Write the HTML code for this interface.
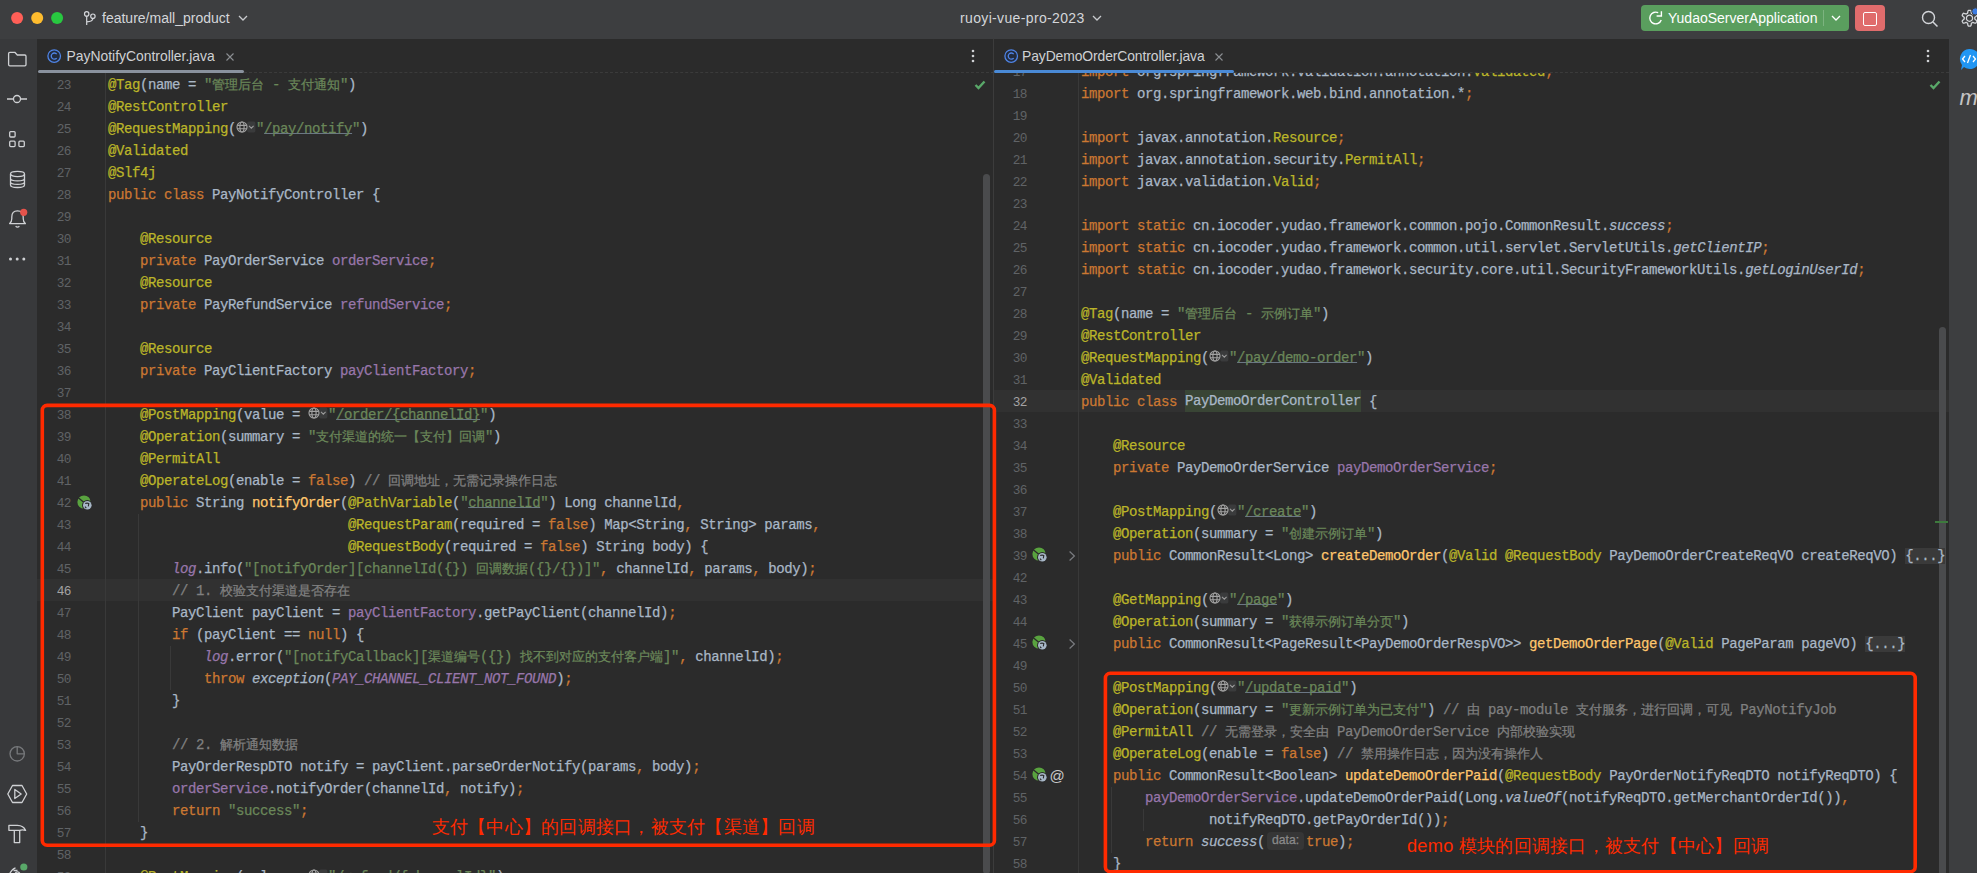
<!DOCTYPE html>
<html><head><meta charset="utf-8"><style>
html,body{margin:0;padding:0}
body{width:1977px;height:873px;overflow:hidden;position:relative;background:#2b2b2b;font-family:"Liberation Sans",sans-serif}
.abs{position:absolute}
.cl,.ln{position:absolute;height:22px;line-height:22px;white-space:pre;font-family:"Liberation Mono",monospace;font-size:14px;letter-spacing:-0.4px;color:#a9b7c6;-webkit-text-stroke:0.25px currentColor}
.ln{margin-top:0.8px;width:40px;text-align:right;color:#606366;font-size:12.8px;letter-spacing:-0.5px;-webkit-text-stroke:0}
.ln.cur{color:#a4a3a3}
.cj{display:inline-block;font-family:"Liberation Sans",sans-serif;font-size:13px;letter-spacing:0;white-space:nowrap;overflow:visible;vertical-align:top}
.k{color:#cc7832}
.a{color:#bbb529}
.s{color:#6a8759}
.u{color:#6a8759;text-decoration:underline;text-decoration-color:#6b7785;text-underline-offset:0px;text-decoration-skip-ink:none}
.c{color:#808080}
.f{color:#9876aa}
.F{color:#9876aa;font-style:italic}
.m{color:#ffc66d}
.i{font-style:italic}
.X{background:#394535;display:inline-block;height:22px;vertical-align:top;margin-top:-1px}
.D{background:#3a3a3a;color:#a9b7c6}
.gl{display:inline-block;width:20px;height:22px;vertical-align:top}
.gl svg{margin-top:2px}
.hint{display:inline-block;width:37px;margin:0 2px;height:17.5px;line-height:17px;margin-top:1px;vertical-align:top;background:#363636;border-radius:4px;color:#8a8a8a;font-family:"Liberation Sans",sans-serif;font-size:12.2px;letter-spacing:0;text-align:center}
.tb{font-size:14px;color:#d4d6da;white-space:pre;line-height:17px}
.tab{font-size:13.9px;color:#cfd1d4;white-space:pre;line-height:17px}
.red{font-size:18.2px;letter-spacing:0.25px;color:#ff2a00;white-space:pre;line-height:24px}

</style></head><body>
<!-- title bar -->
<div class="abs" style="left:0;top:0;width:1977px;height:39px;background:#3d3e40"></div>
<svg class="abs" style="left:0;top:0" width="120" height="37">
  <circle cx="17.1" cy="18.1" r="6" fill="#ff5f57"/>
  <circle cx="37.2" cy="18.1" r="6" fill="#febc2e"/>
  <circle cx="57.1" cy="18.1" r="6" fill="#28c840"/>
  <g fill="none" stroke="#d4d6da" stroke-width="1.2">
    <circle cx="86.7" cy="13.9" r="2.2"/>
    <circle cx="92.9" cy="16.2" r="2.2"/>
    <path d="M86.7 16.1V25M92.9 18.4C92.9 21 90 21.6 86.7 21.8"/>
  </g>
</svg>
<div class="abs tb" style="left:102px;top:10px">feature/mall_product</div>
<svg class="abs" style="left:236px;top:13px" width="14" height="10"><path d="M3 3L7 7L11 3" fill="none" stroke="#c8cacd" stroke-width="1.3"/></svg>
<div class="abs tb" style="left:960px;top:10px;letter-spacing:0.35px">ruoyi-vue-pro-2023</div>
<svg class="abs" style="left:1090px;top:13px" width="14" height="10"><path d="M3 3L7 7L11 3" fill="none" stroke="#c8cacd" stroke-width="1.3"/></svg>
<!-- run config -->
<div class="abs" style="left:1641px;top:5px;width:208px;height:26px;background:#5a9e5e;border-radius:4px"></div>
<svg class="abs" style="left:1645px;top:7px" width="22" height="22"><path d="M16.24 13.02A5.9 5.9 0 1 1 13.19 5.65" fill="none" stroke="#fff" stroke-width="1.4"/><path d="M11.6 9H16.4V4.2" fill="none" stroke="#fff" stroke-width="1.4"/></svg>
<div class="abs" style="left:1668px;top:9.5px;font-size:14px;letter-spacing:0;color:#fff;white-space:pre;line-height:17px">YudaoServerApplication</div>
<div class="abs" style="left:1823px;top:10px;width:1px;height:16px;background:#7cb37f"></div>
<svg class="abs" style="left:1829px;top:13px" width="14" height="10"><path d="M3 3L7 7L11 3" fill="none" stroke="#fff" stroke-width="1.3"/></svg>
<div class="abs" style="left:1855px;top:5px;width:30px;height:26px;background:#e06c6c;border-radius:4px"></div>
<div class="abs" style="left:1863px;top:12px;width:12px;height:12px;border:1.4px solid #fff;border-radius:2px"></div>
<svg class="abs" style="left:1918px;top:7px" width="24" height="24"><circle cx="10.5" cy="10.5" r="6" fill="none" stroke="#d4d6da" stroke-width="1.4"/><path d="M15 15L19.5 19.5" stroke="#d4d6da" stroke-width="1.5"/></svg>
<svg class="abs" style="left:1957px;top:6px" width="20" height="26"><g transform="translate(12.5 12.2)" fill="none" stroke="#d4d6da" stroke-width="1.3" stroke-linejoin="round"><path d="M5.30 0.00L5.29 0.35L5.25 0.69L5.59 1.11L6.38 1.71L7.10 2.41L7.30 3.02L7.09 3.49L6.84 3.95L6.57 4.39L6.27 4.81L5.64 4.94L4.67 4.67L3.76 4.29L3.23 4.20L2.94 4.41L2.65 4.59L2.34 4.75L2.03 4.90L1.83 5.40L1.71 6.38L1.46 7.35L1.03 7.83L0.52 7.88L0.00 7.90L-0.52 7.88L-1.03 7.83L-1.46 7.35L-1.71 6.38L-1.83 5.40L-2.03 4.90L-2.34 4.75L-2.65 4.59L-2.94 4.41L-3.23 4.20L-3.76 4.29L-4.67 4.67L-5.64 4.94L-6.27 4.81L-6.57 4.39L-6.84 3.95L-7.09 3.49L-7.30 3.02L-7.10 2.41L-6.38 1.71L-5.59 1.11L-5.25 0.69L-5.29 0.35L-5.30 0.00L-5.29 -0.35L-5.25 -0.69L-5.59 -1.11L-6.38 -1.71L-7.10 -2.41L-7.30 -3.02L-7.09 -3.49L-6.84 -3.95L-6.57 -4.39L-6.27 -4.81L-5.64 -4.94L-4.67 -4.67L-3.76 -4.29L-3.23 -4.20L-2.94 -4.41L-2.65 -4.59L-2.34 -4.75L-2.03 -4.90L-1.83 -5.40L-1.71 -6.38L-1.46 -7.35L-1.03 -7.83L-0.52 -7.88L-0.00 -7.90L0.52 -7.88L1.03 -7.83L1.46 -7.35L1.71 -6.38L1.83 -5.40L2.03 -4.90L2.34 -4.75L2.65 -4.59L2.94 -4.41L3.23 -4.20L3.76 -4.29L4.67 -4.67L5.64 -4.94L6.27 -4.81L6.57 -4.39L6.84 -3.95L7.09 -3.49L7.30 -3.02L7.10 -2.41L6.38 -1.71L5.59 -1.11L5.25 -0.69L5.29 -0.35Z"/><circle r="3.1"/></g><circle cx="18.4" cy="5.4" r="3.6" fill="#3d7ce0" stroke="#3d3e40" stroke-width="1"/></svg>

<!-- left tool strip -->
<div class="abs" style="left:0;top:39px;width:37px;height:834px;background:#38393b"></div>
<svg class="abs" style="left:0;top:38px" width="37" height="835">
  <g fill="none" stroke="#cfd1d4" stroke-width="1.3" stroke-linejoin="round">
    <path d="M8.6 15.5V26.5Q8.6 27.8 9.9 27.8H24.8Q26 27.8 26 26.5V18.2Q26 17 24.8 17H17.3L14.8 14.3H9.9Q8.6 14.3 8.6 15.5Z"/>
    <path d="M7 61H13.5M20.5 61H27"/><circle cx="17" cy="61" r="3.5"/>
    <rect x="9.7" y="93.6" width="5.4" height="5.4" rx="1"/><rect x="9.7" y="103.2" width="5.4" height="5.4" rx="1"/><rect x="18.9" y="103.2" width="5.4" height="5.4" rx="1"/>
    <ellipse cx="17.5" cy="136" rx="7" ry="2.6"/><path d="M10.5 136V147Q10.5 149.5 17.5 149.5Q24.5 149.5 24.5 147V136M10.5 140.4Q10.5 142.8 17.5 142.8Q24.5 142.8 24.5 140.4M10.5 144Q10.5 146.4 17.5 146.4Q24.5 146.4 24.5 144"/>
    <path d="M9.6 185.6Q11.8 184.2 11.8 180.5V179Q11.8 172.9 17.5 172.9Q23.2 172.9 23.2 179V180.5Q23.2 184.2 25.4 185.6Z"/><path d="M15.6 188.2Q17.5 190 19.4 188.2"/>
  </g>
  <circle cx="23.7" cy="174.3" r="3.6" fill="#e5534b"/>
  <g fill="#cfd1d4"><circle cx="10.5" cy="221" r="1.5"/><circle cx="17.2" cy="221" r="1.5"/><circle cx="23.8" cy="221" r="1.5"/></g>
  <g fill="none" stroke="#cfd1d4" stroke-width="1.3" stroke-linejoin="round">
    <circle cx="17.2" cy="715.8" r="7.2" stroke="#77797c"/><path d="M17.2 708.6V715.8H24.4" stroke="#77797c"/>
    <path d="M12.5 747.5H22L26.7 756L22 764.5H12.5L7.8 756Z"/><path d="M14.8 751.5V760.5L21.2 756Z"/>
    <path d="M8.9 787.4H17.5Q23.5 787.6 25.6 792.4Q22.5 791.3 19.7 792.3H8.9Z"/><path d="M14.3 792.3V804.6H19.7V792.3"/>
    <path d="M9.5 836Q12 831 15.5 829.8M13.5 832.5H17.5" /><circle cx="17.5" cy="836" r="2.2"/>
  </g>
  <circle cx="23.8" cy="829" r="3.6" fill="#59a869"/>
</svg>

<!-- left editor -->
<div class="abs" style="left:37px;top:39px;width:957px;height:834px;background:#2b2b2b;overflow:hidden">
  <svg class="abs" style="left:9px;top:10px" width="16" height="16"><circle cx="8.2" cy="7.1" r="6.3" fill="#222b3d" stroke="#4f84e6" stroke-width="1.3"/><path d="M10.7 5.1A3.1 3.1 0 1 0 10.7 9.1" fill="none" stroke="#4f84e6" stroke-width="1.3"/></svg>
  <div class="abs tab" style="left:29.5px;top:9px">PayNotifyController.java</div>
  <svg class="abs" style="left:187px;top:12px" width="12" height="12"><path d="M2.5 2.5L9.5 9.5M9.5 2.5L2.5 9.5" stroke="#8c8f93" stroke-width="1.1"/></svg>
  <div class="abs" style="left:1.3px;top:31.4px;width:205.3px;height:2.5px;border-radius:2px;background:#8a929e"></div>
  <div class="abs" style="left:207px;top:33px;width:750px;height:0;border-top:1px dashed #3b3b3b"></div>
  <svg class="abs" style="left:930px;top:9px" width="12" height="16"><g fill="#cfd1d4"><circle cx="6" cy="3" r="1.3"/><circle cx="6" cy="8" r="1.3"/><circle cx="6" cy="13" r="1.3"/></g></svg>
  <div class="abs" style="left:0;top:34px;width:957px;height:800px;overflow:hidden">
    <div class="abs" style="left:-37px;top:-73px;width:1977px;height:873px">
      <div class="abs" style="left:37px;top:579px;width:957px;height:22px;background:#313131"></div>
      <div class="abs" style="left:105px;top:73px;width:1px;height:800px;background:#393939"></div>
      <div class="abs" style="left:983px;top:174px;width:7px;height:700px;border-radius:4px;background:#4a4b4d"></div>
<div class="ln" style="top:74.3px;left:31px">23</div>
<div class="cl" style="top:74.3px;left:108px"><span class="a">@Tag</span>(name = <span class="s">"<span class="cj" style="width:52px">管理后台</span> - <span class="cj" style="width:52px">支付通知</span>"</span>)</div>
<div class="ln" style="top:96.3px;left:31px">24</div>
<div class="cl" style="top:96.3px;left:108px"><span class="a">@RestController</span></div>
<div class="ln" style="top:118.3px;left:31px">25</div>
<div class="cl" style="top:118.3px;left:108px"><span class="a">@RequestMapping</span>(<span class="gl"><svg width="20" height="14" viewBox="0 0 20 14"><rect x="11.2" y="1.6" width="8.2" height="10.8" rx="1.6" fill="#3a3b3c"/><g fill="none" stroke="#a2a2a2" stroke-width="1.15"><circle cx="6" cy="7" r="5"/><ellipse cx="6" cy="7" rx="2.1" ry="5"/><path d="M1.2 5.3H10.8M1.2 8.7H10.8"/></g><path d="M13 5.8L15.3 8.1L17.6 5.8" fill="none" stroke="#9a9a9a" stroke-width="1.1"/></svg></span><span class="s">"</span><span class="u">/pay/notify</span><span class="s">"</span>)</div>
<div class="ln" style="top:140.3px;left:31px">26</div>
<div class="cl" style="top:140.3px;left:108px"><span class="a">@Validated</span></div>
<div class="ln" style="top:162.3px;left:31px">27</div>
<div class="cl" style="top:162.3px;left:108px"><span class="a">@Slf4j</span></div>
<div class="ln" style="top:184.3px;left:31px">28</div>
<div class="cl" style="top:184.3px;left:108px"><span class="k">public class </span>PayNotifyController {</div>
<div class="ln" style="top:206.3px;left:31px">29</div>
<div class="ln" style="top:228.3px;left:31px">30</div>
<div class="cl" style="top:228.3px;left:108px">    <span class="a">@Resource</span></div>
<div class="ln" style="top:250.3px;left:31px">31</div>
<div class="cl" style="top:250.3px;left:108px">    <span class="k">private </span>PayOrderService <span class="f">orderService</span><span class="k">;</span></div>
<div class="ln" style="top:272.3px;left:31px">32</div>
<div class="cl" style="top:272.3px;left:108px">    <span class="a">@Resource</span></div>
<div class="ln" style="top:294.3px;left:31px">33</div>
<div class="cl" style="top:294.3px;left:108px">    <span class="k">private </span>PayRefundService <span class="f">refundService</span><span class="k">;</span></div>
<div class="ln" style="top:316.3px;left:31px">34</div>
<div class="ln" style="top:338.3px;left:31px">35</div>
<div class="cl" style="top:338.3px;left:108px">    <span class="a">@Resource</span></div>
<div class="ln" style="top:360.3px;left:31px">36</div>
<div class="cl" style="top:360.3px;left:108px">    <span class="k">private </span>PayClientFactory <span class="f">payClientFactory</span><span class="k">;</span></div>
<div class="ln" style="top:382.3px;left:31px">37</div>
<div class="ln" style="top:404.3px;left:31px">38</div>
<div class="cl" style="top:404.3px;left:108px">    <span class="a">@PostMapping</span>(value = <span class="gl"><svg width="20" height="14" viewBox="0 0 20 14"><rect x="11.2" y="1.6" width="8.2" height="10.8" rx="1.6" fill="#3a3b3c"/><g fill="none" stroke="#a2a2a2" stroke-width="1.15"><circle cx="6" cy="7" r="5"/><ellipse cx="6" cy="7" rx="2.1" ry="5"/><path d="M1.2 5.3H10.8M1.2 8.7H10.8"/></g><path d="M13 5.8L15.3 8.1L17.6 5.8" fill="none" stroke="#9a9a9a" stroke-width="1.1"/></svg></span><span class="s">"</span><span class="u">/order/{channelId}</span><span class="s">"</span>)</div>
<div class="ln" style="top:426.3px;left:31px">39</div>
<div class="cl" style="top:426.3px;left:108px">    <span class="a">@Operation</span>(summary = <span class="s">"<span class="cj" style="width:169px">支付渠道的统一【支付】回调</span>"</span>)</div>
<div class="ln" style="top:448.3px;left:31px">40</div>
<div class="cl" style="top:448.3px;left:108px">    <span class="a">@PermitAll</span></div>
<div class="ln" style="top:470.3px;left:31px">41</div>
<div class="cl" style="top:470.3px;left:108px">    <span class="a">@OperateLog</span>(enable = <span class="k">false</span>) <span class="c">// <span class="cj" style="width:169px">回调地址，无需记录操作日志</span></span></div>
<div class="ln" style="top:492.3px;left:31px">42</div>
<div class="cl" style="top:492.3px;left:108px">    <span class="k">public </span>String <span class="m">notifyOrder</span>(<span class="a">@PathVariable</span>(<span class="s">"</span><span class="u">channelId</span><span class="s">"</span>) Long channelId<span class="k">,</span></div>
<div class="ln" style="top:514.3px;left:31px">43</div>
<div class="cl" style="top:514.3px;left:108px">                              <span class="a">@RequestParam</span>(required = <span class="k">false</span>) Map&lt;String<span class="k">,</span> String&gt; params<span class="k">,</span></div>
<div class="ln" style="top:536.3px;left:31px">44</div>
<div class="cl" style="top:536.3px;left:108px">                              <span class="a">@RequestBody</span>(required = <span class="k">false</span>) String body) {</div>
<div class="ln" style="top:558.3px;left:31px">45</div>
<div class="cl" style="top:558.3px;left:108px">        <span class="F">log</span>.info(<span class="s">"[notifyOrder][channelId({}) <span class="cj" style="width:52px">回调数据</span>({}/{})]"</span><span class="k">,</span> channelId<span class="k">,</span> params<span class="k">,</span> body)<span class="k">;</span></div>
<div class="ln cur" style="top:580.3px;left:31px">46</div>
<div class="cl" style="top:580.3px;left:108px">        <span class="c">// 1. <span class="cj" style="width:130px">校验支付渠道是否存在</span></span></div>
<div class="ln" style="top:602.3px;left:31px">47</div>
<div class="cl" style="top:602.3px;left:108px">        PayClient payClient = <span class="f">payClientFactory</span>.getPayClient(channelId)<span class="k">;</span></div>
<div class="ln" style="top:624.3px;left:31px">48</div>
<div class="cl" style="top:624.3px;left:108px">        <span class="k">if </span>(payClient == <span class="k">null</span>) {</div>
<div class="ln" style="top:646.3px;left:31px">49</div>
<div class="cl" style="top:646.3px;left:108px">            <span class="F">log</span>.error(<span class="s">"[notifyCallback][<span class="cj" style="width:52px">渠道编号</span>({}) <span class="cj" style="width:143px">找不到对应的支付客户端</span>]"</span><span class="k">,</span> channelId)<span class="k">;</span></div>
<div class="ln" style="top:668.3px;left:31px">50</div>
<div class="cl" style="top:668.3px;left:108px">            <span class="k">throw </span><span class="i">exception</span>(<span class="F">PAY_CHANNEL_CLIENT_NOT_FOUND</span>)<span class="k">;</span></div>
<div class="ln" style="top:690.3px;left:31px">51</div>
<div class="cl" style="top:690.3px;left:108px">        }</div>
<div class="ln" style="top:712.3px;left:31px">52</div>
<div class="ln" style="top:734.3px;left:31px">53</div>
<div class="cl" style="top:734.3px;left:108px">        <span class="c">// 2. <span class="cj" style="width:78px">解析通知数据</span></span></div>
<div class="ln" style="top:756.3px;left:31px">54</div>
<div class="cl" style="top:756.3px;left:108px">        PayOrderRespDTO notify = payClient.parseOrderNotify(params<span class="k">,</span> body)<span class="k">;</span></div>
<div class="ln" style="top:778.3px;left:31px">55</div>
<div class="cl" style="top:778.3px;left:108px">        <span class="f">orderService</span>.notifyOrder(channelId<span class="k">,</span> notify)<span class="k">;</span></div>
<div class="ln" style="top:800.3px;left:31px">56</div>
<div class="cl" style="top:800.3px;left:108px">        <span class="k">return </span><span class="s">"success"</span><span class="k">;</span></div>
<div class="ln" style="top:822.3px;left:31px">57</div>
<div class="cl" style="top:822.3px;left:108px">    }</div>
<div class="ln" style="top:844.3px;left:31px">58</div>
<div class="ln" style="top:866.3px;left:31px">59</div>
<div class="cl" style="top:866.3px;left:108px">    <span class="a">@PostMapping</span>(value = <span class="gl"><svg width="20" height="14" viewBox="0 0 20 14"><rect x="11.2" y="1.6" width="8.2" height="10.8" rx="1.6" fill="#3a3b3c"/><g fill="none" stroke="#a2a2a2" stroke-width="1.15"><circle cx="6" cy="7" r="5"/><ellipse cx="6" cy="7" rx="2.1" ry="5"/><path d="M1.2 5.3H10.8M1.2 8.7H10.8"/></g><path d="M13 5.8L15.3 8.1L17.6 5.8" fill="none" stroke="#9a9a9a" stroke-width="1.1"/></svg></span><span class="s">"</span><span class="u">/refund/{channelId}</span><span class="s">"</span>)</div><svg class="abs" style="left:76px;top:493.6px" width="18" height="18" viewBox="-8 -8 18 18"><circle r="6.6" fill="#59a33f"/><path d="M-6 -4.6L1.5 1.8" stroke="#2b2b2b" stroke-width="1.3"/><circle cx="3.3" cy="3.2" r="5.3" fill="#2b2b2b"/><circle cx="3.3" cy="3.2" r="4.3" fill="#a7b7c7"/><path d="M1.2 1.6Q3 0.6 4.8 1.5L4.3 4.4M1 4.6L2.3 6.2" fill="none" stroke="#2b2b2b" stroke-width="1.1"/></svg><div class="abs" style="left:138px;top:514.3px;width:1px;height:308px;background:#393939"></div><div class="abs" style="left:170px;top:646.3px;width:1px;height:44px;background:#393939"></div>
      <svg class="abs" style="left:973px;top:79px" width="14" height="12"><path d="M2.5 6L5.5 9L11.5 2.5" fill="none" stroke="#59a869" stroke-width="2.4"/></svg>
    </div>
  </div>
</div>
<div class="abs" style="left:993px;top:38px;width:1px;height:835px;background:#3c3c3c"></div>
<!-- right editor -->
<div class="abs" style="left:994px;top:39px;width:955px;height:834px;background:#2b2b2b;overflow:hidden">
  <svg class="abs" style="left:9px;top:10px" width="16" height="16"><circle cx="8.2" cy="7.1" r="6.3" fill="#222b3d" stroke="#4f84e6" stroke-width="1.3"/><path d="M10.7 5.1A3.1 3.1 0 1 0 10.7 9.1" fill="none" stroke="#4f84e6" stroke-width="1.3"/></svg>
  <div class="abs tab" style="left:28px;top:9px;letter-spacing:-0.1px">PayDemoOrderController.java</div>
  <svg class="abs" style="left:219px;top:12px" width="12" height="12"><path d="M2.5 2.5L9.5 9.5M9.5 2.5L2.5 9.5" stroke="#8c8f93" stroke-width="1.1"/></svg>
  <div class="abs" style="left:0;top:31.4px;width:240px;height:2.8px;border-radius:2px;background:#4a8ad6"></div>
  <div class="abs" style="left:240px;top:33px;width:715px;height:0;border-top:1px dashed #3b3b3b"></div>
  <svg class="abs" style="left:928px;top:9px" width="12" height="16"><g fill="#cfd1d4"><circle cx="6" cy="3" r="1.3"/><circle cx="6" cy="8" r="1.3"/><circle cx="6" cy="13" r="1.3"/></g></svg>
  <div class="abs" style="left:0;top:34px;width:955px;height:800px;overflow:hidden">
    <div class="abs" style="left:-994px;top:-73px;width:1977px;height:873px">
      <div class="abs" style="left:994px;top:390px;width:955px;height:22px;background:#313131"></div>
      <div class="abs" style="left:1078px;top:73px;width:1px;height:800px;background:#393939"></div>
      <div class="abs" style="left:1939px;top:327px;width:7px;height:560px;border-radius:4px;background:#4a4b4d"></div>
<div class="ln" style="top:61px;left:987px">17</div>
<div class="cl" style="top:61px;left:1081px"><span class="k">import </span>org.springframework.validation.annotation.<span class="a">Validated</span><span class="k">;</span></div>
<div class="ln" style="top:83px;left:987px">18</div>
<div class="cl" style="top:83px;left:1081px"><span class="k">import </span>org.springframework.web.bind.annotation.*<span class="k">;</span></div>
<div class="ln" style="top:105px;left:987px">19</div>
<div class="ln" style="top:127px;left:987px">20</div>
<div class="cl" style="top:127px;left:1081px"><span class="k">import </span>javax.annotation.<span class="a">Resource</span><span class="k">;</span></div>
<div class="ln" style="top:149px;left:987px">21</div>
<div class="cl" style="top:149px;left:1081px"><span class="k">import </span>javax.annotation.security.<span class="a">PermitAll</span><span class="k">;</span></div>
<div class="ln" style="top:171px;left:987px">22</div>
<div class="cl" style="top:171px;left:1081px"><span class="k">import </span>javax.validation.<span class="a">Valid</span><span class="k">;</span></div>
<div class="ln" style="top:193px;left:987px">23</div>
<div class="ln" style="top:215px;left:987px">24</div>
<div class="cl" style="top:215px;left:1081px"><span class="k">import static </span>cn.iocoder.yudao.framework.common.pojo.CommonResult.<span class="i">success</span><span class="k">;</span></div>
<div class="ln" style="top:237px;left:987px">25</div>
<div class="cl" style="top:237px;left:1081px"><span class="k">import static </span>cn.iocoder.yudao.framework.common.util.servlet.ServletUtils.<span class="i">getClientIP</span><span class="k">;</span></div>
<div class="ln" style="top:259px;left:987px">26</div>
<div class="cl" style="top:259px;left:1081px"><span class="k">import static </span>cn.iocoder.yudao.framework.security.core.util.SecurityFrameworkUtils.<span class="i">getLoginUserId</span><span class="k">;</span></div>
<div class="ln" style="top:281px;left:987px">27</div>
<div class="ln" style="top:303px;left:987px">28</div>
<div class="cl" style="top:303px;left:1081px"><span class="a">@Tag</span>(name = <span class="s">"<span class="cj" style="width:52px">管理后台</span> - <span class="cj" style="width:52px">示例订单</span>"</span>)</div>
<div class="ln" style="top:325px;left:987px">29</div>
<div class="cl" style="top:325px;left:1081px"><span class="a">@RestController</span></div>
<div class="ln" style="top:347px;left:987px">30</div>
<div class="cl" style="top:347px;left:1081px"><span class="a">@RequestMapping</span>(<span class="gl"><svg width="20" height="14" viewBox="0 0 20 14"><rect x="11.2" y="1.6" width="8.2" height="10.8" rx="1.6" fill="#3a3b3c"/><g fill="none" stroke="#a2a2a2" stroke-width="1.15"><circle cx="6" cy="7" r="5"/><ellipse cx="6" cy="7" rx="2.1" ry="5"/><path d="M1.2 5.3H10.8M1.2 8.7H10.8"/></g><path d="M13 5.8L15.3 8.1L17.6 5.8" fill="none" stroke="#9a9a9a" stroke-width="1.1"/></svg></span><span class="s">"</span><span class="u">/pay/demo-order</span><span class="s">"</span>)</div>
<div class="ln" style="top:369px;left:987px">31</div>
<div class="cl" style="top:369px;left:1081px"><span class="a">@Validated</span></div>
<div class="ln cur" style="top:391px;left:987px">32</div>
<div class="cl" style="top:391px;left:1081px"><span class="k">public class </span><span class="X">PayDemoOrderController</span> {</div>
<div class="ln" style="top:413px;left:987px">33</div>
<div class="ln" style="top:435px;left:987px">34</div>
<div class="cl" style="top:435px;left:1081px">    <span class="a">@Resource</span></div>
<div class="ln" style="top:457px;left:987px">35</div>
<div class="cl" style="top:457px;left:1081px">    <span class="k">private </span>PayDemoOrderService <span class="f">payDemoOrderService</span><span class="k">;</span></div>
<div class="ln" style="top:479px;left:987px">36</div>
<div class="ln" style="top:501px;left:987px">37</div>
<div class="cl" style="top:501px;left:1081px">    <span class="a">@PostMapping</span>(<span class="gl"><svg width="20" height="14" viewBox="0 0 20 14"><rect x="11.2" y="1.6" width="8.2" height="10.8" rx="1.6" fill="#3a3b3c"/><g fill="none" stroke="#a2a2a2" stroke-width="1.15"><circle cx="6" cy="7" r="5"/><ellipse cx="6" cy="7" rx="2.1" ry="5"/><path d="M1.2 5.3H10.8M1.2 8.7H10.8"/></g><path d="M13 5.8L15.3 8.1L17.6 5.8" fill="none" stroke="#9a9a9a" stroke-width="1.1"/></svg></span><span class="s">"</span><span class="u">/create</span><span class="s">"</span>)</div>
<div class="ln" style="top:523px;left:987px">38</div>
<div class="cl" style="top:523px;left:1081px">    <span class="a">@Operation</span>(summary = <span class="s">"<span class="cj" style="width:78px">创建示例订单</span>"</span>)</div>
<div class="ln" style="top:545px;left:987px">39</div>
<div class="cl" style="top:545px;left:1081px">    <span class="k">public </span>CommonResult&lt;Long&gt; <span class="m">createDemoOrder</span>(<span class="a">@Valid @RequestBody</span> PayDemoOrderCreateReqVO createReqVO) <span class="D">{...}</span></div>
<div class="ln" style="top:567px;left:987px">42</div>
<div class="ln" style="top:589px;left:987px">43</div>
<div class="cl" style="top:589px;left:1081px">    <span class="a">@GetMapping</span>(<span class="gl"><svg width="20" height="14" viewBox="0 0 20 14"><rect x="11.2" y="1.6" width="8.2" height="10.8" rx="1.6" fill="#3a3b3c"/><g fill="none" stroke="#a2a2a2" stroke-width="1.15"><circle cx="6" cy="7" r="5"/><ellipse cx="6" cy="7" rx="2.1" ry="5"/><path d="M1.2 5.3H10.8M1.2 8.7H10.8"/></g><path d="M13 5.8L15.3 8.1L17.6 5.8" fill="none" stroke="#9a9a9a" stroke-width="1.1"/></svg></span><span class="s">"</span><span class="u">/page</span><span class="s">"</span>)</div>
<div class="ln" style="top:611px;left:987px">44</div>
<div class="cl" style="top:611px;left:1081px">    <span class="a">@Operation</span>(summary = <span class="s">"<span class="cj" style="width:104px">获得示例订单分页</span>"</span>)</div>
<div class="ln" style="top:633px;left:987px">45</div>
<div class="cl" style="top:633px;left:1081px">    <span class="k">public </span>CommonResult&lt;PageResult&lt;PayDemoOrderRespVO&gt;&gt; <span class="m">getDemoOrderPage</span>(<span class="a">@Valid</span> PageParam pageVO) <span class="D">{...}</span></div>
<div class="ln" style="top:655px;left:987px">49</div>
<div class="ln" style="top:677px;left:987px">50</div>
<div class="cl" style="top:677px;left:1081px">    <span class="a">@PostMapping</span>(<span class="gl"><svg width="20" height="14" viewBox="0 0 20 14"><rect x="11.2" y="1.6" width="8.2" height="10.8" rx="1.6" fill="#3a3b3c"/><g fill="none" stroke="#a2a2a2" stroke-width="1.15"><circle cx="6" cy="7" r="5"/><ellipse cx="6" cy="7" rx="2.1" ry="5"/><path d="M1.2 5.3H10.8M1.2 8.7H10.8"/></g><path d="M13 5.8L15.3 8.1L17.6 5.8" fill="none" stroke="#9a9a9a" stroke-width="1.1"/></svg></span><span class="s">"</span><span class="u">/update-paid</span><span class="s">"</span>)</div>
<div class="ln" style="top:699px;left:987px">51</div>
<div class="cl" style="top:699px;left:1081px">    <span class="a">@Operation</span>(summary = <span class="s">"<span class="cj" style="width:130px">更新示例订单为已支付</span>"</span>) <span class="c">// <span class="cj" style="width:13px">由</span> pay-module <span class="cj" style="width:156px">支付服务，进行回调，可见</span> PayNotifyJob</span></div>
<div class="ln" style="top:721px;left:987px">52</div>
<div class="cl" style="top:721px;left:1081px">    <span class="a">@PermitAll</span> <span class="c">// <span class="cj" style="width:104px">无需登录，安全由</span> PayDemoOrderService <span class="cj" style="width:78px">内部校验实现</span></span></div>
<div class="ln" style="top:743px;left:987px">53</div>
<div class="cl" style="top:743px;left:1081px">    <span class="a">@OperateLog</span>(enable = <span class="k">false</span>) <span class="c">// <span class="cj" style="width:182px">禁用操作日志，因为没有操作人</span></span></div>
<div class="ln" style="top:765px;left:987px">54</div>
<div class="cl" style="top:765px;left:1081px">    <span class="k">public </span>CommonResult&lt;Boolean&gt; <span class="m">updateDemoOrderPaid</span>(<span class="a">@RequestBody</span> PayOrderNotifyReqDTO notifyReqDTO) {</div>
<div class="ln" style="top:787px;left:987px">55</div>
<div class="cl" style="top:787px;left:1081px">        <span class="f">payDemoOrderService</span>.updateDemoOrderPaid(Long.<span class="i">valueOf</span>(notifyReqDTO.getMerchantOrderId())<span class="k">,</span></div>
<div class="ln" style="top:809px;left:987px">56</div>
<div class="cl" style="top:809px;left:1081px">                notifyReqDTO.getPayOrderId())<span class="k">;</span></div>
<div class="ln" style="top:831px;left:987px">57</div>
<div class="cl" style="top:831px;left:1081px">        <span class="k">return </span><span class="i">success</span>(<span class="hint">data:</span><span class="k">true</span>)<span class="k">;</span></div>
<div class="ln" style="top:853px;left:987px">58</div>
<div class="cl" style="top:853px;left:1081px">    }</div><svg class="abs" style="left:1031.3px;top:546.3px" width="18" height="18" viewBox="-8 -8 18 18"><circle r="6.6" fill="#59a33f"/><path d="M-6 -4.6L1.5 1.8" stroke="#2b2b2b" stroke-width="1.3"/><circle cx="3.3" cy="3.2" r="5.3" fill="#2b2b2b"/><circle cx="3.3" cy="3.2" r="4.3" fill="#a7b7c7"/><path d="M1.2 1.6Q3 0.6 4.8 1.5L4.3 4.4M1 4.6L2.3 6.2" fill="none" stroke="#2b2b2b" stroke-width="1.1"/></svg><svg class="abs" style="left:1031.3px;top:634.3px" width="18" height="18" viewBox="-8 -8 18 18"><circle r="6.6" fill="#59a33f"/><path d="M-6 -4.6L1.5 1.8" stroke="#2b2b2b" stroke-width="1.3"/><circle cx="3.3" cy="3.2" r="5.3" fill="#2b2b2b"/><circle cx="3.3" cy="3.2" r="4.3" fill="#a7b7c7"/><path d="M1.2 1.6Q3 0.6 4.8 1.5L4.3 4.4M1 4.6L2.3 6.2" fill="none" stroke="#2b2b2b" stroke-width="1.1"/></svg><svg class="abs" style="left:1031.3px;top:766.3px" width="18" height="18" viewBox="-8 -8 18 18"><circle r="6.6" fill="#59a33f"/><path d="M-6 -4.6L1.5 1.8" stroke="#2b2b2b" stroke-width="1.3"/><circle cx="3.3" cy="3.2" r="5.3" fill="#2b2b2b"/><circle cx="3.3" cy="3.2" r="4.3" fill="#a7b7c7"/><path d="M1.2 1.6Q3 0.6 4.8 1.5L4.3 4.4M1 4.6L2.3 6.2" fill="none" stroke="#2b2b2b" stroke-width="1.1"/></svg><svg class="abs" style="left:1067px;top:545px" width="10" height="22"><path d="M2.6 6.5L7.4 11L2.6 15.5" fill="none" stroke="#7a7c80" stroke-width="1.2"/></svg><svg class="abs" style="left:1067px;top:633px" width="10" height="22"><path d="M2.6 6.5L7.4 11L2.6 15.5" fill="none" stroke="#7a7c80" stroke-width="1.2"/></svg><div class="abs" style="left:1049px;top:765px;width:16px;height:22px;line-height:22px;text-align:center;font-size:15px;color:#c9c9c9;font-family:'Liberation Sans',sans-serif">@</div><div class="abs" style="left:1111px;top:787px;width:1px;height:66px;background:#393939"></div><div class="abs" style="left:1143px;top:809px;width:1px;height:22px;background:#393939"></div>
      <svg class="abs" style="left:1928px;top:79px" width="14" height="12"><path d="M2.5 6L5.5 9L11.5 2.5" fill="none" stroke="#59a869" stroke-width="2.4"/></svg>
      <div class="abs" style="left:1935px;top:521px;width:13px;height:1.5px;background:#3d7a3d"></div>
    </div>
  </div>
</div>
<!-- right strip -->
<div class="abs" style="left:1949px;top:39px;width:28px;height:834px;background:#3d3e40"></div>
<svg class="abs" style="left:1951px;top:40px" width="28" height="60"><path d="M18 9A10 10 0 1 1 13 27L10 30L11 25A10 10 0 0 1 18 9Z" fill="#2196f3"/><path d="M14 16L11.5 19L14 22M22 16L24.5 19L22 22M19.5 15L16.5 23" fill="none" stroke="#fff" stroke-width="1.3"/></svg>
<div class="abs" style="left:1959.5px;top:85px;font-size:22px;font-style:italic;color:#c4c4c4">m</div>

<!-- red annotation boxes -->
<svg class="abs" style="left:0;top:0" width="1977" height="873"><g fill="none" stroke="#ff2a00" stroke-width="3.6"><rect x="42.3" y="405.4" width="952.1" height="439.8" rx="4.8"/><rect x="1105.4" y="673.3" width="809.8" height="198.4" rx="4.8"/></g></svg>
<div class="abs red" style="left:431.5px;top:814.5px">支付【中心】的回调接口，被支付【渠道】回调</div>

<div class="abs red" style="left:1407px;top:833.5px">demo 模块的回调接口，被支付【中心】回调</div>

</body></html>
